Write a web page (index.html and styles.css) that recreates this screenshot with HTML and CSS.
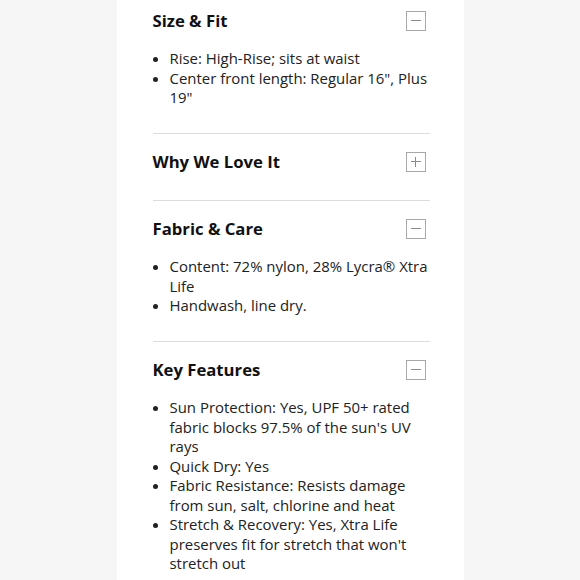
FILE: index.html
```html
<!DOCTYPE html>
<html lang="en">
<head>
<meta charset="utf-8">
<link rel="stylesheet" href="styles.css">
</head>
<body>
<div class="page">
  <div class="column">
    <section class="acc open first">
      <div class="acc-head">
        <h2 class="acc-title">Size &amp; Fit</h2>
        <span class="toggle minus"></span>
      </div>
      <ul class="acc-list">
        <li>Rise: High-Rise; sits at waist</li>
        <li>Center front length: Regular 16", Plus 19"</li>
      </ul>
    </section>
    <section class="acc">
      <div class="acc-head">
        <h2 class="acc-title">Why We Love It</h2>
        <span class="toggle plus"></span>
      </div>
    </section>
    <section class="acc open">
      <div class="acc-head">
        <h2 class="acc-title">Fabric &amp; Care</h2>
        <span class="toggle minus"></span>
      </div>
      <ul class="acc-list">
        <li>Content: 72% nylon, 28% Lycra® Xtra Life</li>
        <li>Handwash, line dry.</li>
      </ul>
    </section>
    <section class="acc open">
      <div class="acc-head">
        <h2 class="acc-title">Key Features</h2>
        <span class="toggle minus"></span>
      </div>
      <ul class="acc-list">
        <li>Sun Protection: Yes, UPF 50+ rated fabric blocks 97.5% of the sun's UV rays</li>
        <li>Quick Dry: Yes</li>
        <li>Fabric Resistance: Resists damage from sun, salt, chlorine and heat</li>
        <li>Stretch &amp; Recovery: Yes, Xtra Life preserves fit for stretch that won't stretch out</li>
      </ul>
    </section>
  </div>
</div>
</body>
</html>
```
FILE: styles.css
```css
html, body {
  margin: 0;
  padding: 0;
  background: #f6f6f6;
}
.page {
  width: 580px;
  height: 580px;
  overflow: hidden;
  display: flex;
  justify-content: center;
}
.column {
  width: 347px;
  background: #fff;
  padding: 0 34px 0 36px;
  box-sizing: border-box;
  font-family: "Open Sans", "DejaVu Sans", sans-serif;
  color: #222;
}
.acc {
  border-top: 1px solid #dcdcdc;
  padding: 17px 0 27px;
}
.acc.open {
  padding-bottom: 25.5px;
}
.acc.first {
  border-top: none;
  padding-top: 10px;
}
.acc-head {
  display: flex;
  align-items: center;
  justify-content: space-between;
  height: 22px;
}
.acc-title {
  margin: 0;
  font-size: 16.7px;
  font-weight: 700;
  color: #111;
  line-height: 22px;
}
.toggle {
  width: 18px;
  height: 18px;
  border: 1px solid #a8a8a8;
  margin-right: 4px;
  margin-top: -1px;
  position: relative;
}
.toggle::before,
.toggle::after {
  content: "";
  position: absolute;
  background: #8a8a8a;
}
.toggle::before {
  left: 4px;
  right: 4px;
  top: 8px;
  height: 1.5px;
}
.plus::after {
  top: 4px;
  bottom: 4px;
  left: 8px;
  width: 1.5px;
}
.acc-list {
  margin: 17px 0 0;
  padding: 0 0 0 17px;
  font-size: 14.95px;
  line-height: 19.5px;
}
```
